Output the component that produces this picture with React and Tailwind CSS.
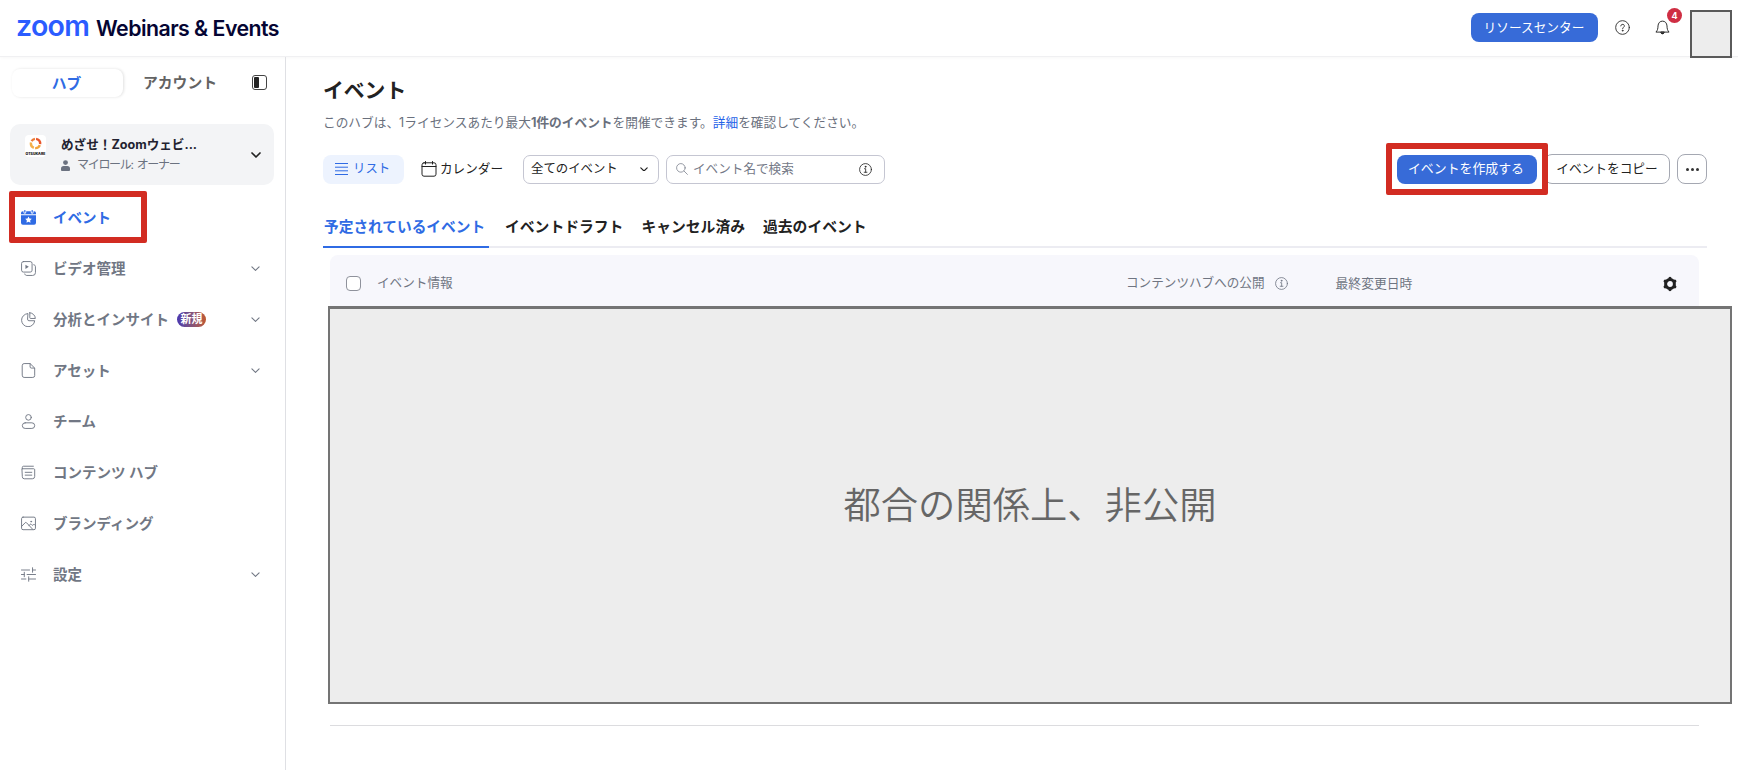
import React from 'react'

function Chevron({ className, width = 1.2 }) {
  return (
    <svg viewBox="0 0 10 6" fill="none" stroke="currentColor" strokeWidth={width} strokeLinecap="round" strokeLinejoin="round" className={className}>
      <path d="M1 1l4 4 4-4" />
    </svg>
  )
}

function Icon({ children, className = 'size-[15px]' }) {
  return (
    <svg viewBox="0 0 16 16" fill="none" stroke="currentColor" strokeWidth="1" strokeLinecap="round" strokeLinejoin="round" className={className + ' shrink-0'}>
      {children}
    </svg>
  )
}

function InfoIcon({ className }) {
  return (
    <Icon className={className}>
      <circle cx="8" cy="8" r="7.3" />
      <path d="M6.8 7h1.4v4.4M6.4 11.4h3.4" />
      <circle cx="8" cy="4.6" r="0.6" fill="currentColor" />
    </Icon>
  )
}

const icons = {
  event: (
    <>
      <path fill="currentColor" stroke="none" d="M2 1.3h.6V2.4a1.5 1.5 0 0 0 3 0V1.3h4.8V2.4a1.5 1.5 0 0 0 3 0V1.3H14a2 2 0 0 1 2 2V4.4H0V3.3a2 2 0 0 1 2-2zM0 5.6h16v8A2 2 0 0 1 14 15.6H2a2 2 0 0 1-2-2z" />
      <path d="M4.1.6v1.6M11.9.6v1.6" strokeWidth="1.3" />
      <path fill="white" stroke="none" d="M8 6.9l1.1 2.2 2.4.35-1.75 1.7.4 2.4L8 12.4l-2.15 1.15.4-2.4-1.75-1.7 2.4-.35z" />
    </>
  ),
  video: (
    <>
      <rect x="0.6" y="0.6" width="11.2" height="11.2" rx="2" />
      <path d="M4.7 4v4.4l3.6-2.2z" fill="currentColor" stroke="none" />
      <path d="M13.6 4c1.2.2 1.8.9 1.8 2v6.4a3 3 0 0 1-3 3H6.2c-1.2 0-2-.6-2.2-1.6" />
    </>
  ),
  chart: (
    <>
      <path d="M7 1.7A7 7 0 1 0 14.6 9.3H8.4A1.4 1.4 0 0 1 7 7.9z" />
      <path d="M9.4.8v5.4c0 .4.3.7.7.7h5.2A6.3 6.3 0 0 0 9.4.8z" />
    </>
  ),
  asset: (
    <>
      <path d="M1.3 2.5A2 2 0 0 1 3.3.6h6.4l4.9 4.8v8a2 2 0 0 1-2 2H3.3a2 2 0 0 1-2-2z" />
      <path d="M9.7.8v3.4c0 .7.5 1.2 1.2 1.2h3.4" />
    </>
  ),
  team: (
    <>
      <circle cx="8" cy="3.6" r="3" />
      <rect x="1.4" y="9.4" width="13.2" height="6" rx="3" />
    </>
  ),
  content: (
    <>
      <path d="M1.4 4V2.5c0-.7.5-1.2 1.2-1.2h10.6M1.4 4h12.2c.6 0 1 .4 1 1v7.2a2.5 2.5 0 0 1-2.5 2.5H3.4a2 2 0 0 1-2-2z" />
      <path d="M4.5 7.8h7M4.5 10.8h7" />
    </>
  ),
  brand: (
    <>
      <rect x="0.6" y="1.2" width="14.8" height="13.4" rx="1.6" />
      <path d="M.8 11l3.6-3.8c.5-.5 1-.5 1.5 0l6.6 7M8.4 10.4l1.1-1.4c.5-.5 1.1-.5 1.5 0l1 1 1.2-.8c.5-.3 1-.3 1.4.1l.8.8" />
      <circle cx="10.8" cy="6" r="0.5" />
    </>
  ),
  settings: (
    <path d="M.5 3.2h8.6M12.3.8v4.8M12.3 3.2h3.2M.5 8h3M3.5 5.6v4.8M6.5 8h9M.5 12.8h4.7M8.2 10.4v4.8M8.2 12.8h7.3" />
  ),
}

const navItems = [
  { icon: 'event', label: 'イベント', active: true },
  { icon: 'video', label: 'ビデオ管理', more: true },
  { icon: 'chart', label: '分析とインサイト', badge: '新規', more: true },
  { icon: 'asset', label: 'アセット', more: true },
  { icon: 'team', label: 'チーム' },
  { icon: 'content', label: 'コンテンツ ハブ' },
  { icon: 'brand', label: 'ブランディング' },
  { icon: 'settings', label: '設定', more: true },
]

function Header() {
  return (
    <header className="flex h-[57px] shrink-0 items-start border-b border-[#f0f0f2] pl-4 shadow-[0_1px_3px_rgba(0,0,0,0.03)]">
      <div className="mt-[6px] flex h-10 items-baseline font-['Inter'] leading-10">
        <span className="w-[80px] text-[28.5px] font-semibold tracking-[-0.7px] text-[#2b5cff]">zoom</span>
        <span className="text-[21.3px] font-semibold tracking-[-0.53px] text-[#050533]">Webinars &amp; Events</span>
      </div>
      <div className="ml-auto flex items-start">
        <button className="mt-[13px] h-[29px] w-[127px] rounded-[8px] bg-[#376bd8] pr-px text-[12.7px] leading-[27px] text-white">リソースセンター</button>
        <Icon className="mt-[20px] ml-[17px] size-[15px] text-[#333]">
          <circle cx="8" cy="8" r="7.3" />
          <path d="M6.1 6.3c.1-2.3 3.9-2.3 3.9 0 0 1.4-1.9 1.5-1.9 3" />
          <circle cx="8.1" cy="11.4" r="0.45" fill="currentColor" />
        </Icon>
        <div className="relative mt-[20px] ml-[25px]">
          <Icon className="size-[15px] text-[#222]">
            <path d="M1.3 12.6c1.5-1.6 1.8-3.4 1.9-6.3C3.4 3.2 5.3 1.2 8 1.2s4.6 2 4.8 5.1c.1 2.9.4 4.7 1.9 6.3z" />
            <path d="M6.2 13.2c.2 2.2 3.4 2.2 3.6 0z" fill="currentColor" />
          </Icon>
          <span className="absolute -top-[12px] left-[12px] size-[15px] rounded-full bg-[#cf2e43] text-center font-['Inter'] text-[9px] leading-[15px] font-bold text-white">4</span>
        </div>
        <div className="mt-[10px] mr-[6px] ml-[20px] h-12 w-[42px] border-2 border-[#5a5a5a] bg-[#ededed]" />
      </div>
    </header>
  )
}

function Sidebar() {
  return (
    <aside className="w-[286px] shrink-0 border-r border-[#dfe0e4]">
      <div className="mt-[12px] ml-3 flex h-7 items-center text-[14.8px] font-bold">
        <div className="h-7 w-[111px] rounded-[8px] bg-white pr-[2px] text-center leading-[30px] text-[#2f6be4] shadow-[1px_0_3px_rgba(0,0,0,0.12)]">ハブ</div>
        <div className="ml-[20px] leading-[28px] text-[#636363]">アカウント</div>
        <div className="mb-[2px] ml-auto mr-[18px] flex size-[15px] rounded-[3px] border border-[#444] p-[1px]">
          <div className="h-full w-[5px] rounded-[1px] bg-[#222]" />
        </div>
      </div>

      <div className="mt-[27px] ml-[10px] flex h-[61px] w-[264px] items-center rounded-[10px] bg-[#f3f4f6]">
        <div className="mb-[17px] ml-[15px] flex h-[22px] w-[21px] flex-col items-center rounded-[4px] bg-white pt-[2px]">
          <svg viewBox="0 0 14 14" fill="none" strokeWidth="2.6" className="size-[13px]">
            <path d="M7.6 2A5 5 0 0 1 12 7.6" stroke="#e8552b" />
            <path d="M11.6 8.8A5 5 0 0 1 6.6 12" stroke="#f3a33a" />
            <path d="M5.2 11.6A5 5 0 0 1 2.2 6" stroke="#f4b04a" />
            <path d="M2.8 4.4A5 5 0 0 1 6.4 2" stroke="#ec7a35" />
          </svg>
          <span className="mt-[2px] font-['Inter'] text-[3.5px] leading-[4px] font-black text-[#222]">OTSUKARE</span>
        </div>
        <div className="mt-px ml-[15px]">
          <p className="text-[12.6px] leading-5 font-bold text-[#222230]">めざせ！Zoomウェビ...</p>
          <p className="flex items-center text-[12px] leading-5 tracking-[-1.3px] text-[#6b7280]">
            <svg viewBox="0 0 10 12" fill="currentColor" className="mr-[7px] h-[11px] w-[9px]">
              <circle cx="5" cy="2.8" r="2.7" />
              <path d="M0 9.5a3 3 0 0 1 3-3h4a3 3 0 0 1 3 3V11a1 1 0 0 1-1 1H1a1 1 0 0 1-1-1z" />
            </svg>
            マイロール:<span className="ml-1">オーナー</span>
          </p>
        </div>
        <Chevron width={1.7} className="mr-[13px] ml-auto w-[10px] text-[#222]" />
      </div>

      <nav className="relative mt-[7px]">
        {navItems.map((item) => (
          <div key={item.label} className={'flex h-[51px] items-center pr-[25px] pl-[21px] ' + (item.active ? 'text-[#2f6be4]' : 'text-[#717784]')}>
            <Icon>{icons[item.icon]}</Icon>
            <span className="ml-[17px] text-[14.5px] leading-5 font-bold">{item.label}</span>
            {item.badge && (
              <span className="ml-[8px] h-[15px] w-[29px] rounded-full bg-linear-to-r from-[#4a35b0] to-[#c0582a] text-center text-[11px] leading-[14px] font-bold text-white">{item.badge}</span>
            )}
            {item.more && <Chevron className="ml-auto w-[9px]" />}
          </div>
        ))}
        <div className="absolute -top-px left-[9px] h-[52px] w-[138px] rounded-[2px] border-6 border-[#d22c22]" />
      </nav>
    </aside>
  )
}

function Toolbar() {
  return (
    <div className="mt-[21px] flex h-[30px] items-center text-[12.4px] text-[#222]">
      <button className="flex h-[29px] w-[81px] items-center rounded-[8px] bg-[#edf3fe] pl-3 text-[#2f6be4]">
        <svg viewBox="0 0 13 12" stroke="currentColor" strokeWidth="1" className="mr-[5px] h-3 w-[13px]">
          <path d="M0 .5h13M0 4.2h13M0 7.8h13M0 11.5h13" />
        </svg>
        リスト
      </button>
      <button className="ml-[17px] flex w-[84px] items-center text-[12.6px] whitespace-nowrap">
        <Icon className="mr-[3px] size-4">
          <path d="M1 5.5h14M4.5.5v2.6M11.5.5v2.6" />
          <rect x="1" y="1.8" width="14" height="13.4" rx="2" />
        </Icon>
        カレンダー
      </button>
      <div className="ml-[18px] flex h-[29px] w-[136px] items-center rounded-[7px] border border-[#c5c6d2] pr-[10px] pl-[7px]">
        全てのイベント
        <Chevron width={1.5} className="ml-auto w-[8px]" />
      </div>
      <div className="ml-[7px] flex h-[29px] w-[219px] items-center rounded-[7px] border border-[#c5c6d2] pr-3 pl-[9px] text-[12.6px] text-[#747987]">
        <Icon className="mr-[5px] size-3">
          <circle cx="6.5" cy="6.5" r="5.7" />
          <path d="M10.8 10.8l4.4 4.4" />
        </Icon>
        イベント名で検索
        <InfoIcon className="ml-auto size-[13px] text-[#222]" />
      </div>

      <div className="relative ml-auto">
        <button className="block h-[29px] w-[140px] rounded-[8px] bg-[#376bd8] pr-[2px] text-[12.9px] text-white">イベントを作成する</button>
        <div className="absolute -top-[12px] -left-[11px] z-10 h-[52px] w-[162px] rounded-[2px] border-6 border-[#d22c22]" />
      </div>
      <button className="ml-[7px] h-[30px] w-[126px] rounded-[8px] border border-[#a5a8b2] text-[12.7px]">イベントをコピー</button>
      <button className="ml-[7px] flex h-[30px] w-[30px] items-center justify-center gap-[2px] rounded-[8px] border border-[#a5a8b2]">
        <i className="size-[3px] rounded-full bg-[#333]" />
        <i className="size-[3px] rounded-full bg-[#333]" />
        <i className="size-[3px] rounded-full bg-[#333]" />
      </button>
    </div>
  )
}

function Events() {
  return (
    <main className="flex-1 pl-[37px] pr-[31px]">
      <h1 className="mt-[18px] text-[20.8px] leading-8 font-bold text-[#222]">イベント</h1>
      <p className="mt-[6px] text-[12.7px] leading-5 whitespace-nowrap text-[#6a707d]">
        このハブは、1ライセンスあたり最大<b>1件のイベント</b>を開催できます。<a className="text-[#2462e8]">詳細</a>を確認してください。
      </p>
      <Toolbar />

      <div className="mt-[30px] flex h-[34px] border-b-2 border-[#ececf2] text-[14.8px] leading-[27px] font-bold text-[#222]">
        <div className="h-[34px] w-[166px] border-b-2 border-[#2f6be4] pl-px text-[14.7px] text-[#2f6be4]">予定されているイベント</div>
        <div className="ml-[16px]">イベントドラフト</div>
        <div className="ml-[18px]">キャンセル済み</div>
        <div className="ml-[18px]">過去のイベント</div>
      </div>

      <div className="relative mt-[7px] mr-[8px] ml-[7px] h-[471px] border-b border-[#dcdcdf]">
        <div className="flex h-[57px] items-center rounded-t-[8px] bg-[#f7f7fc] pl-4 text-[12.6px] text-[#6f7582]">
          <div className="size-[15px] rounded-[4px] border border-[#8f929c] bg-white" />
          <span className="ml-[16px] w-[749px]">イベント情報</span>
          <span className="whitespace-nowrap">コンテンツハブへの公開</span>
          <InfoIcon className="ml-[10px] size-[13px]" />
          <span className="ml-[48px] text-[12.8px]">最終変更日時</span>
          <svg viewBox="0 0 16 16" className="mr-[21px] ml-auto size-[16px]" fill="none" stroke="#222" strokeWidth="3">
            <circle cx="8" cy="8" r="4.4" />
            <path strokeWidth="3.2" strokeLinecap="round" d="M8 2.4v.4M8 13.2v.4M3.2 5.2l.4.3M12.4 10.5l.4.3M12.8 5.2l-.4.3M3.6 10.5l-.4.3" />
          </svg>
        </div>
        <div className="absolute top-[51px] -left-[2px] flex h-[398px] w-[1404px] items-center justify-center border-2 border-t-3 border-[#747474] bg-[#ededed] text-[37.3px] font-[350] text-[#666]">
          都合の関係上、非公開
        </div>
      </div>
    </main>
  )
}

export default function App() {
  return (
    <div className="flex h-[770px] w-[1738px] flex-col overflow-hidden bg-white font-['Inter','Noto_Sans_CJK_JP',sans-serif]">
      <Header />
      <div className="flex flex-1">
        <Sidebar />
        <Events />
      </div>
    </div>
  )
}
